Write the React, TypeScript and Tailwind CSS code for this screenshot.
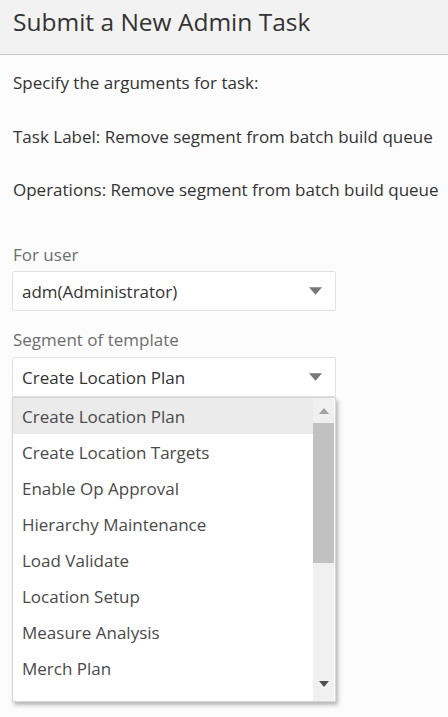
import { useState } from 'react'

// Choices available for the template segment (the visible part of the list)
const segments = [
  'Create Location Plan',
  'Create Location Targets',
  'Enable Op Approval',
  'Hierarchy Maintenance',
  'Load Validate',
  'Location Setup',
  'Measure Analysis',
  'Merch Plan',
]

function Caret({ className }: { className: string }) {
  return (
    <svg viewBox="0 0 12 7" className={className}>
      <path d="M0 0h12L6 7z" fill="currentColor" />
    </svg>
  )
}

function SelectBox({ value }: { value: string }) {
  return (
    <div className="w-[324px] h-10 border border-[#e3e3e3] rounded-[2px] bg-white flex items-center justify-between pl-[9px] pr-[13px]">
      <span className="text-[#333] text-[17px] pt-px">{value}</span>
      <Caret className="w-[13px] h-[8px] text-[#777]" />
    </div>
  )
}

export default function App() {
  const [selected, setSelected] = useState(segments[0])

  return (
    <div className="min-h-[717px] bg-[#fcfcfc] font-['Open_Sans',sans-serif] text-[#333]">
      {/* Cabecera */}
      <div className="h-[55px] bg-[#f2f2f2] border-b border-[#cacaca] pl-[13px] pt-[4px]">
        <h1 className="text-[24.5px] leading-[36px] text-[#333]">Submit a New Admin Task</h1>
      </div>

      <div className="pl-[13px]">
        <p className="mt-[16px] text-[17px] leading-6">Specify the arguments for task:</p>
        <p className="mt-[30px] text-[17px] leading-6">Task Label: Remove segment from batch build queue</p>
        <p className="mt-[29px] text-[17px] leading-6">Operations: Remove segment from batch build queue</p>

        <div className="-ml-px">
          <label className="block mt-[41px] pl-px text-[17px] leading-6 text-[#6e6e6e]">For user</label>
          <div className="mt-[4px]">
            <SelectBox value="adm(Administrator)" />
          </div>

          <label className="block mt-[17px] pl-px text-[17px] leading-6 text-[#6e6e6e]">Segment of template</label>
          <div className="mt-[5px]">
            <SelectBox value={selected} />
          </div>

          {/* Lista desplegable abierta */}
          <div className="w-[324px] h-[305px] border border-[#d6d6d6] bg-white flex overflow-hidden shadow-[2px_3px_4px_rgba(0,0,0,0.28)]">
            <ul className="flex-1">
              {segments.map((s) => (
                <li
                  key={s}
                  onClick={() => setSelected(s)}
                  className={`h-9 flex items-center pl-[9px] pt-[2px] text-[17px] text-[#4a4a4a] ${
                    s === selected ? 'bg-[#ebebeb]' : ''
                  }`}
                >
                  {s}
                </li>
              ))}
            </ul>
            <div className="w-[21px] mr-px bg-[#f0f0f0] flex flex-col">
              <div className="h-[25px] flex items-center justify-center">
                <Caret className="w-[10px] h-[6px] rotate-180 text-[#a3a3a3]" />
              </div>
              <div className="h-[140px] bg-[#c1c1c1]" />
              <div className="flex-1 flex items-end justify-center pb-[14px]">
                <Caret className="w-[10px] h-[6px] text-[#505050]" />
              </div>
            </div>
          </div>
        </div>
      </div>
    </div>
  )
}
